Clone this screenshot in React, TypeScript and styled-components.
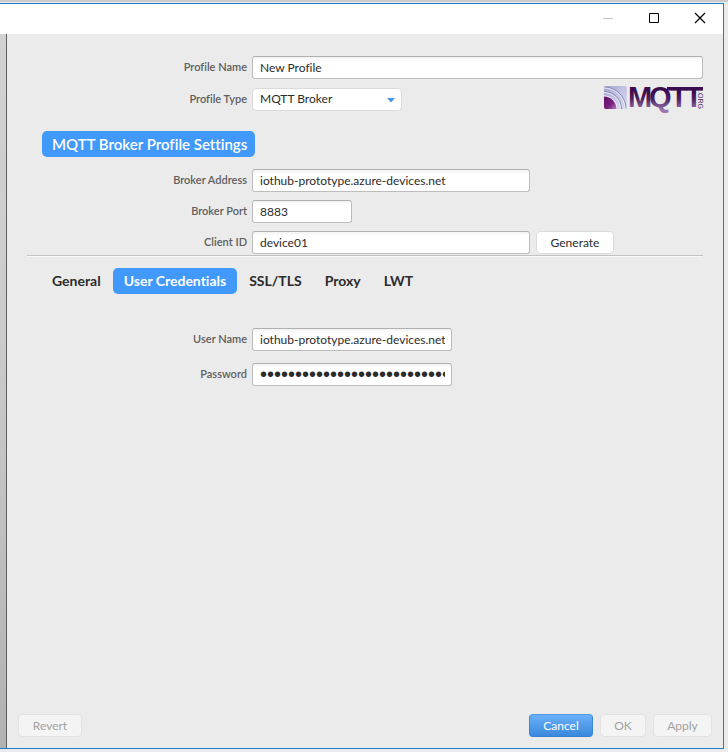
import React, { useState } from "react";
import styled, { createGlobalStyle, css } from "styled-components";

const GlobalStyle = createGlobalStyle`
  * { box-sizing: border-box; }
  body {
    margin: 0;
    background: #ebebeb;
    color: #2b2b2b;
    font: 12px/16px Lato, "Open Sans", sans-serif;
    font-variant-ligatures: none;
  }
  button, input, select {
    font: inherit;
    font-variant-ligatures: none;
    color: inherit;
  }
`;

const Screen = styled.div`
  display: flex;
  flex-direction: column;
  min-height: 100vh;
  padding: 0 4px 3px 0;
  border-top: 2px solid #cbcbcb;
`;

const Window = styled.main`
  flex: 1;
  display: flex;
  flex-direction: column;
  margin-top: 1px;
  border: solid #1a7fd0;
  border-width: 1px 1px 1px 0;
`;

const TitleBar = styled.header`
  display: flex;
  justify-content: flex-end;
  height: 30px;
  padding-bottom: 2px;
  background: #fff;
`;

const CaptionButton = styled.button`
  display: grid;
  place-items: center;
  width: 46px;
  padding: 0;
  border: 0;
  background: none;
`;

const Body = styled.div`
  flex: 1;
  display: flex;
`;

const SideStrip = styled.aside`
  width: 7px;
  border-right: 1px solid #5e5e5e;
  background: linear-gradient(#d2d2d2, #cccccc 40%, #b2b2b2);
`;

const Panel = styled.form`
  flex: 1;
  min-width: 0;
  display: flex;
  flex-direction: column;
  padding: 22px 20px 11px;
`;

const Fields = styled.div<{ $gap: number }>`
  display: flex;
  flex-direction: column;
  gap: ${(p) => p.$gap}px;
`;

const Row = styled.div`
  display: grid;
  grid-template-columns: 220px minmax(0, 1fr);
  align-items: center;
  column-gap: 5px;
  height: 23px;
`;

const Label = styled.label`
  padding-bottom: 1px;
  text-align: right;
  font-size: 11px;
  font-weight: 600;
  color: #5e5e5e;
`;

const Controls = styled.div`
  display: flex;
  align-items: center;
  gap: 6px;
`;

const TextInput = styled.input<{ $width: string }>`
  width: ${(p) => p.$width};
  height: 23px;
  padding: 0 6px 1px 7px;
  border: 1px solid #bdbdbd;
  border-top-color: #b0b0b0;
  border-radius: 3px;
  background: #fff linear-gradient(#f3f3f3, #fff 4px);
  outline: none;
`;

const PasswordInput = styled(TextInput)`
  font-family: "Liberation Sans", sans-serif;
  font-size: 20px;
`;

const SelectBox = styled.div`
  position: relative;
  width: 150px;
`;

const Select = styled.select`
  appearance: none;
  display: block;
  width: 100%;
  height: 23px;
  padding: 0 24px 0 7px;
  border: 1px solid #dadada;
  border-radius: 4px;
  background: #fff;
`;

const Arrow = styled.svg`
  position: absolute;
  right: 7px;
  top: 10px;
  pointer-events: none;
`;

const Logo = styled.svg`
  flex: none;
  margin: -2px 0 0 auto;
  overflow: visible;
`;

const blueTag = css`
  background: #4099fb;
  color: #fff;
`;

const Heading = styled.h1`
  ${blueTag}
  align-self: flex-start;
  margin: 21px 0 12px 15px;
  padding: 3px 8px 3px 10px;
  border-radius: 5px;
  font-size: 15px;
  line-height: 20px;
  font-weight: 600;
`;

const Divider = styled.hr`
  width: 100%;
  height: 2px;
  margin: 1px 0 11px;
  border: solid #c3c3c3;
  border-width: 1px 0 0;
  background: #f8f8f8;
`;

const Tabs = styled.div`
  display: flex;
  gap: 1px;
  margin: 0 0 34px 14px;
`;

const Tab = styled.button<{ $active: boolean }>`
  padding: 3px 11px;
  border: 0;
  border-radius: 5px;
  background: none;
  font-size: 14px;
  line-height: 20px;
  font-weight: 700;
  ${(p) => p.$active && blueTag}
`;

const Footer = styled.footer`
  display: flex;
  justify-content: space-between;
  margin: auto -9px 0 -9px;
`;

const Actions = styled.div`
  display: flex;
  gap: 7px;
`;

const Button = styled.button<{ $primary?: boolean; $width: number }>`
  width: ${(p) => p.$width}px;
  height: 23px;
  padding: 0;
  border: 1px solid #dadada;
  border-radius: 4px;
  background: #fff;
  &:disabled {
    border-color: #e2e2e2;
    background: #f4f4f4;
    color: #a2a2a2;
  }
  ${(p) =>
    p.$primary &&
    css`
      border-color: #4a97e6 #3b87d8 #3680d0;
      background: linear-gradient(#6bb0f9, #3a88dc);
      color: #fff;
    `}
`;

function MqttLogo() {
  return (
    <Logo width="100" height="26" viewBox="0 0 100 26" role="img" aria-label="MQTT.ORG">
      <defs>
        <linearGradient id="word" gradientUnits="userSpaceOnUse" x1="0" y1="3" x2="0" y2="25">
          <stop offset="0.2" stopColor="#3a0d50" />
          <stop offset="0.5" stopColor="#4c2063" />
          <stop offset="1" stopColor="#9a76ab" />
        </linearGradient>
        <linearGradient id="tile" x1="0" y1="0" x2="1" y2="1">
          <stop offset="0" stopColor="#a4a4ce" />
          <stop offset="0.5" stopColor="#c3c3e2" />
          <stop offset="1" stopColor="#dcdcf0" />
        </linearGradient>
        <linearGradient id="core" gradientUnits="userSpaceOnUse" x1="1" y1="14" x2="14" y2="26">
          <stop offset="0" stopColor="#641168" />
          <stop offset="0.5" stopColor="#7a2382" />
          <stop offset="1" stopColor="#c49acb" />
        </linearGradient>
        <clipPath id="tileClip">
          <rect x="1" y="1" width="23" height="23" rx="2" />
        </clipPath>
      </defs>
      <g clipPath="url(#tileClip)">
        <rect x="1" y="1" width="23" height="23" fill="url(#tile)" />
        <circle cx="1" cy="24" r="22" fill="none" stroke="#8286ba" strokeWidth="1" />
        <circle cx="1" cy="24" r="21" fill="none" stroke="#e9e9f7" strokeWidth="1" />
        <circle cx="1" cy="24" r="17.5" fill="none" stroke="#8286ba" strokeWidth="1" />
        <circle cx="1" cy="24" r="16.5" fill="none" stroke="#e9e9f7" strokeWidth="1" />
        <circle cx="1" cy="24" r="13.5" fill="#ececf6" />
        <circle cx="1" cy="24" r="12.5" fill="url(#core)" />
      </g>
      <text x="25 46 67 82" y="22" fontFamily="Liberation Sans, Arial, sans-serif" fontWeight="700" fontSize="29" fill="url(#word)">
        MQTT
      </text>
      <path d="M64 2h36v3.500H64z" fill="#3a0d50" />
      <text transform="translate(95 6) rotate(90)" fontFamily="Liberation Sans, Arial, sans-serif" fontSize="7" fill="#4a2060">
        .ORG
      </text>
    </Logo>
  );
}

const tabs = ["General", "User Credentials", "SSL/TLS", "Proxy", "LWT"];

export default function App() {
  const [active, setActive] = useState("User Credentials");
  return (
    <Screen>
      <GlobalStyle />
      <Window>
        <TitleBar>
          <CaptionButton aria-label="Minimize">
            <svg width="12" height="12" viewBox="0 0 12 12" stroke="#c4c4c4"><path d="M1 6.500h10" /></svg>
          </CaptionButton>
          <CaptionButton aria-label="Maximize">
            <svg width="12" height="12" viewBox="0 0 12 12" stroke="#000" fill="none"><path d="M1.500 1.500h9v9h-9z" /></svg>
          </CaptionButton>
          <CaptionButton aria-label="Close">
            <svg width="12" height="12" viewBox="0 0 12 12" stroke="#000" strokeWidth="1.2"><path d="M1 1l10 10M11 1L1 11" /></svg>
          </CaptionButton>
        </TitleBar>
        <Body>
          <SideStrip />
          <Panel onSubmit={(e) => e.preventDefault()}>
            <Fields $gap={8}>
              <Row>
                <Label htmlFor="name">Profile Name</Label>
                <TextInput id="name" $width="100%" defaultValue="New Profile" />
              </Row>
              <Row>
                <Label htmlFor="type">Profile Type</Label>
                <Controls>
                  <SelectBox>
                    <Select id="type"><option>MQTT Broker</option></Select>
                    <Arrow width="8" height="5" viewBox="0 0 8 5" fill="#4a98e8"><path d="M0 0h8L4 4.500z" /></Arrow>
                  </SelectBox>
                  <MqttLogo />
                </Controls>
              </Row>
            </Fields>
            <Heading>MQTT Broker Profile Settings</Heading>
            <Fields $gap={8}>
              <Row>
                <Label htmlFor="address">Broker Address</Label>
                <TextInput id="address" $width="278px" defaultValue="iothub-prototype.azure-devices.net" />
              </Row>
              <Row>
                <Label htmlFor="port">Broker Port</Label>
                <TextInput id="port" $width="100px" defaultValue="8883" />
              </Row>
              <Row>
                <Label htmlFor="client">Client ID</Label>
                <Controls>
                  <TextInput id="client" $width="278px" defaultValue="device01" />
                  <Button type="button" $width={78}>Generate</Button>
                </Controls>
              </Row>
            </Fields>
            <Divider />
            <Tabs role="tablist">
              {tabs.map((t) => (
                <Tab key={t} type="button" role="tab" aria-selected={t === active} $active={t === active} onClick={() => setActive(t)}>
                  {t}
                </Tab>
              ))}
            </Tabs>
            <Fields $gap={12}>
              <Row>
                <Label htmlFor="user">User Name</Label>
                <TextInput id="user" $width="200px" defaultValue="iothub-prototype.azure-devices.net/device01" />
              </Row>
              <Row>
                <Label htmlFor="password">Password</Label>
                <PasswordInput id="password" type="password" $width="200px" defaultValue="abcdefghijklmnopqrstuvwxyzabcdefghijkl" />
              </Row>
            </Fields>
            <Footer>
              <Button type="button" disabled $width={64}>Revert</Button>
              <Actions>
                <Button type="button" $primary $width={64}>Cancel</Button>
                <Button type="button" disabled $width={46}>OK</Button>
                <Button type="button" disabled $width={59}>Apply</Button>
              </Actions>
            </Footer>
          </Panel>
        </Body>
      </Window>
    </Screen>
  );
}
